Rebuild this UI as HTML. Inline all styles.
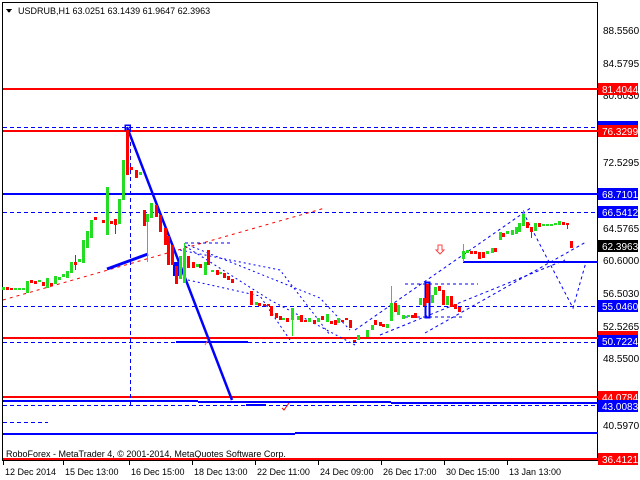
<!DOCTYPE html>
<html><head><meta charset="utf-8"><style>
html,body{margin:0;padding:0;background:#fff;width:640px;height:480px;overflow:hidden}
svg{display:block}
text{font-family:"Liberation Sans",sans-serif;font-size:10px}
.s{font-size:9px}
</style></head><body>
<svg width="640" height="480" viewBox="0 0 640 480" xmlns="http://www.w3.org/2000/svg" shape-rendering="crispEdges">
<rect x="0" y="0" width="640" height="480" fill="#fff"/>
<rect x="2.5" y="2.5" width="595" height="458" fill="none" stroke="#000" stroke-width="1"/>
<polygon points="6,9 12,9 9,13" fill="#000"/>
<text class="s" x="18" y="14">USDRUB,H1  63.0251 63.1439 61.9647 62.3963</text>
<text class="s" x="6" y="457">RoboForex - MetaTrader 4, © 2001-2014, MetaQuotes Software Corp.</text>

<g>
<rect x="3" y="88" width="595" height="2" fill="#f00"/>
<line x1="3" y1="127.5" x2="597" y2="127.5" stroke="#00f" stroke-dasharray="4,3"/>
<rect x="3" y="130" width="595" height="2" fill="#f00"/>
<rect x="3" y="193" width="595" height="2" fill="#00f"/>
<line x1="3" y1="212.5" x2="597" y2="212.5" stroke="#00f" stroke-dasharray="4,3"/>
<rect x="463" y="261" width="135" height="2" fill="#00f"/>
<line x1="3" y1="306.5" x2="597" y2="306.5" stroke="#00f" stroke-dasharray="4,3"/>
<rect x="3" y="337" width="595" height="2" fill="#f00"/>
<line x1="3" y1="342.5" x2="597" y2="342.5" stroke="#00f" stroke-dasharray="4,3"/>
<rect x="176" y="341" width="72" height="2" fill="#00f"/>
<rect x="3" y="396" width="595" height="2" fill="#f00"/>
<rect x="3" y="400" width="195" height="2" fill="#00f"/>
<rect x="198" y="401" width="193" height="2" fill="#00f"/>
<rect x="391" y="402" width="207" height="2" fill="#00f"/>
<line x1="3" y1="405.5" x2="597" y2="405.5" stroke="#00f" stroke-dasharray="4,3"/>
<rect x="246" y="404" width="20" height="2" fill="#00f"/>
<line x1="3" y1="422.5" x2="48" y2="422.5" stroke="#00f" stroke-dasharray="4,3"/>
<rect x="3" y="433" width="292" height="2" fill="#00f"/>
<rect x="295" y="432" width="303" height="2" fill="#00f"/>
<rect x="3" y="458" width="595" height="2" fill="#f00"/>
</g>

<line x1="130.5" y1="128" x2="130.5" y2="407" stroke="#00f" stroke-dasharray="4,3"/>

<g fill="none" shape-rendering="auto">
<line x1="3" y1="300" x2="325" y2="208" stroke="#f00" stroke-dasharray="3,4"/>
<line x1="127" y1="127" x2="232" y2="400" stroke="#00f" stroke-width="2.5"/>
<line x1="107" y1="269" x2="148" y2="254" stroke="#00f" stroke-width="3"/>
<polyline points="185,243 230,243" stroke="#00f" stroke-dasharray="3,3"/>
<polyline points="188,245 320,298 350,330" stroke="#00f" stroke-dasharray="2,3"/>
<polyline points="188,280 260,296 290,340" stroke="#00f" stroke-dasharray="2,3"/>
<polyline points="185,246 270,300 355,345" stroke="#00f" stroke-dasharray="2,3"/>
<polyline points="180,250 280,270 330,335" stroke="#00f" stroke-dasharray="2,3"/>
<polyline points="355,330 532,207" stroke="#00f" stroke-dasharray="3,3"/>
<polyline points="425,333 586,242" stroke="#00f" stroke-dasharray="3,3"/>
<polyline points="380,335 565,260" stroke="#00f" stroke-dasharray="3,3"/>
<polyline points="523,212 573,308 586,262" stroke="#00f" stroke-dasharray="3,3"/>
<polyline points="405,284 478,284" stroke="#00f" stroke-dasharray="3,3"/>
<polyline points="405,317 462,317" stroke="#00f" stroke-dasharray="3,3"/>
<path d="M282,408 L284,410 L289,403" stroke="#f00" stroke-width="1"/>
<path d="M205,345 L208,340" stroke="#f66" stroke-width="1"/>
<path d="M438,245 h4 v5 h2 l-4,4 -4,-4 h2z" stroke="#f44" fill="#fff"/>
</g>
<rect x="125" y="125" width="5" height="5" fill="none" stroke="#00f" stroke-width="1.5"/>
<rect x="425.5" y="282.5" width="4" height="35" fill="none" stroke="#00f" stroke-width="2"/>
<rect x="173" y="262" width="6" height="14" fill="#00f"/>

<g>
<g fill="#22dd22">
<rect x="2" y="287" width="3" height="3"/><rect x="14" y="288" width="3" height="2"/><rect x="18" y="288" width="3" height="2"/><rect x="22" y="288" width="3" height="2"/>
<rect x="26" y="281" width="3" height="12"/><rect x="38" y="280" width="3" height="2"/><rect x="46" y="278" width="3" height="10"/>
<rect x="54" y="276" width="3" height="8"/><rect x="58" y="277" width="3" height="3"/><rect x="62" y="274" width="3" height="3"/>
<rect x="66" y="271" width="3" height="7"/><rect x="70" y="262" width="3" height="11"/><rect x="78" y="259" width="3" height="3"/>
<rect x="82" y="240" width="3" height="23"/><rect x="86" y="231" width="3" height="17"/><rect x="90" y="220" width="3" height="18"/>
<rect x="106" y="187" width="3" height="48"/><rect x="118" y="199" width="3" height="25"/><rect x="122" y="160" width="3" height="40"/>
<rect x="139" y="172" width="3" height="3"/><rect x="146" y="214" width="3" height="8"/><rect x="147" y="220" width="1" height="42"/>
<rect x="150" y="203" width="3" height="15"/>
<rect x="179" y="256" width="3" height="23"/><rect x="183" y="248" width="3" height="35"/><rect x="184" y="243" width="1" height="40"/>
<rect x="196" y="264" width="3" height="3"/><rect x="204" y="262" width="3" height="13"/><rect x="211" y="270" width="3" height="2"/><rect x="219" y="272" width="3" height="2"/>
<rect x="255" y="302" width="3" height="3"/><rect x="282" y="318" width="3" height="2"/>
<rect x="291" y="308" width="3" height="12"/><rect x="292" y="318" width="1" height="18"/><rect x="297" y="316" width="3" height="4"/>
<rect x="308" y="318" width="3" height="4"/><rect x="317" y="318" width="3" height="4"/><rect x="326" y="314" width="3" height="8"/><rect x="337" y="318" width="3" height="5"/>
<rect x="357" y="335" width="3" height="5"/><rect x="366" y="330" width="3" height="7"/><rect x="371" y="325" width="3" height="5"/><rect x="386" y="324" width="3" height="4"/>
<rect x="390" y="303" width="3" height="18"/><rect x="391" y="286" width="1" height="20"/><rect x="397" y="305" width="3" height="10"/><rect x="402" y="315" width="3" height="4"/><rect x="407" y="315" width="3" height="2"/>
<rect x="419" y="298" width="3" height="7"/><rect x="431" y="295" width="3" height="8"/><rect x="434" y="287" width="3" height="8"/><rect x="446" y="296" width="3" height="9"/>
<rect x="462" y="251" width="3" height="8"/><rect x="463" y="244" width="1" height="18"/><rect x="466" y="250" width="3" height="3"/><rect x="486" y="251" width="3" height="3"/>
<rect x="491" y="248" width="3" height="5"/><rect x="499" y="232" width="3" height="8"/><rect x="506" y="231" width="3" height="3"/><rect x="511" y="230" width="3" height="5"/>
<rect x="515" y="227" width="3" height="7"/><rect x="518" y="223" width="3" height="9"/><rect x="522" y="214" width="3" height="12"/><rect x="523" y="210" width="1" height="10"/>
<rect x="534" y="223" width="3" height="8"/><rect x="542" y="224" width="3" height="2"/><rect x="546" y="224" width="3" height="2"/><rect x="550" y="224" width="3" height="2"/><rect x="554" y="223" width="3" height="2"/><rect x="558" y="221" width="3" height="4"/>
</g>
<g fill="#f00">
<rect x="6" y="287" width="3" height="3"/><rect x="10" y="288" width="3" height="2"/><rect x="30" y="280" width="3" height="3"/><rect x="34" y="281" width="3" height="3"/>
<rect x="42" y="282" width="3" height="4"/><rect x="50" y="283" width="3" height="3"/><rect x="74" y="262" width="3" height="3"/><rect x="75" y="255" width="1" height="15"/>
<rect x="94" y="217" width="3" height="3"/><rect x="102" y="220" width="3" height="3"/><rect x="110" y="221" width="3" height="3"/><rect x="114" y="219" width="3" height="6"/><rect x="115" y="219" width="1" height="15"/>
<rect x="126" y="130" width="3" height="45"/><rect x="130" y="167" width="3" height="3"/><rect x="135" y="170" width="3" height="8"/>
<rect x="143" y="210" width="3" height="16"/><rect x="155" y="205" width="3" height="12"/><rect x="159" y="215" width="3" height="17"/><rect x="164" y="228" width="3" height="17"/>
<rect x="167" y="236" width="3" height="29"/><rect x="171" y="245" width="3" height="20"/><rect x="175" y="266" width="3" height="18"/>
<rect x="187" y="256" width="3" height="12"/><rect x="192" y="262" width="3" height="6"/><rect x="199" y="264" width="3" height="4"/><rect x="207" y="250" width="3" height="15"/>
<rect x="216" y="270" width="3" height="5"/><rect x="223" y="273" width="3" height="5"/><rect x="227" y="276" width="3" height="4"/><rect x="231" y="279" width="3" height="4"/>
<rect x="250" y="291" width="3" height="14"/><rect x="258" y="303" width="3" height="3"/><rect x="263" y="304" width="3" height="2"/><rect x="267" y="304" width="3" height="2"/>
<rect x="270" y="306" width="3" height="10"/><rect x="275" y="313" width="3" height="5"/><rect x="279" y="316" width="3" height="4"/><rect x="286" y="318" width="3" height="4"/>
<rect x="300" y="315" width="3" height="7"/><rect x="304" y="320" width="3" height="2"/><rect x="313" y="320" width="3" height="4"/><rect x="321" y="316" width="3" height="4"/>
<rect x="330" y="321" width="3" height="3"/><rect x="334" y="320" width="3" height="5"/><rect x="341" y="320" width="3" height="2"/><rect x="345" y="318" width="3" height="2"/><rect x="349" y="320" width="3" height="8"/><rect x="353" y="340" width="3" height="2"/>
<rect x="374" y="320" width="3" height="5"/><rect x="379" y="322" width="3" height="4"/><rect x="382" y="324" width="3" height="3"/>
<rect x="394" y="303" width="3" height="9"/><rect x="411" y="315" width="3" height="3"/><rect x="414" y="313" width="3" height="5"/>
<rect x="423" y="298" width="3" height="8"/><rect x="426" y="284" width="3" height="19"/><rect x="438" y="286" width="3" height="5"/><rect x="442" y="290" width="3" height="15"/>
<rect x="450" y="296" width="3" height="11"/><rect x="454" y="304" width="3" height="5"/><rect x="458" y="307" width="3" height="5"/>
<rect x="470" y="251" width="3" height="3"/><rect x="474" y="251" width="3" height="3"/><rect x="478" y="252" width="3" height="7"/><rect x="482" y="252" width="3" height="6"/>
<rect x="494" y="248" width="3" height="4"/><rect x="502" y="233" width="3" height="4"/><rect x="526" y="222" width="3" height="6"/><rect x="530" y="227" width="3" height="5"/><rect x="531" y="227" width="1" height="11"/>
<rect x="538" y="223" width="3" height="4"/><rect x="562" y="222" width="3" height="3"/><rect x="566" y="223" width="3" height="2"/><rect x="567" y="223" width="1" height="6"/>
<rect x="570" y="241" width="3" height="7"/>
</g>
</g>

<g>
<text x="603" y="34">88.5560</text>
<text x="603" y="67">84.5795</text>
<text x="603" y="99">80.6030</text>
<text x="603" y="166">72.5295</text>
<text x="603" y="232">64.5765</text>
<text x="603" y="264">60.6000</text>
<text x="603" y="297">56.5030</text>
<text x="603" y="330">52.5265</text>
<text x="603" y="362">48.5500</text>
<text x="603" y="429">40.5970</text>
</g>
<g>
<rect x="598" y="83" width="40" height="12" fill="#f00"/><text x="602" y="93" fill="#fff">81.4044</text>
<rect x="598" y="121" width="40" height="6" fill="#00f"/>
<rect x="598" y="125" width="40" height="12" fill="#f00"/><text x="602" y="135" fill="#fff">76.3299</text>
<rect x="598" y="188" width="40" height="12" fill="#00f"/><text x="602" y="198" fill="#fff">68.7101</text>
<rect x="598" y="206" width="40" height="12" fill="#00f"/><text x="602" y="216" fill="#fff">66.5412</text>
<rect x="598" y="240" width="40" height="12" fill="#000"/><text x="602" y="250" fill="#fff">62.3963</text>
<rect x="598" y="300" width="40" height="12" fill="#00f"/><text x="602" y="310" fill="#fff">55.0460</text>
<rect x="598" y="331" width="40" height="5" fill="#f00"/>
<rect x="598" y="335" width="40" height="12" fill="#00f"/><text x="602" y="345" fill="#fff">50.7224</text>
<rect x="598" y="391" width="40" height="12" fill="#f00"/><text x="602" y="401" fill="#fff">44.0784</text>
<rect x="598" y="400" width="40" height="12" fill="#00f"/><text x="602" y="410" fill="#fff">43.0083</text>
<rect x="598" y="453" width="40" height="12" fill="#f00"/><text x="602" y="463" fill="#fff">36.4121</text>
</g>
<g stroke="#000">
<line x1="3.5" y1="461" x2="3.5" y2="465"/><line x1="63.5" y1="461" x2="63.5" y2="465"/><line x1="129.5" y1="461" x2="129.5" y2="465"/><line x1="192.5" y1="461" x2="192.5" y2="465"/><line x1="255.5" y1="461" x2="255.5" y2="465"/><line x1="318.5" y1="461" x2="318.5" y2="465"/><line x1="381.5" y1="461" x2="381.5" y2="465"/><line x1="444.5" y1="461" x2="444.5" y2="465"/><line x1="507.5" y1="461" x2="507.5" y2="465"/>
</g>
<g class="s">
<text class="s" x="5" y="475">12 Dec 2014</text>
<text class="s" x="65" y="475">15 Dec 13:00</text>
<text class="s" x="131" y="475">16 Dec 15:00</text>
<text class="s" x="194" y="475">18 Dec 13:00</text>
<text class="s" x="257" y="475">22 Dec 11:00</text>
<text class="s" x="320" y="475">24 Dec 09:00</text>
<text class="s" x="383" y="475">26 Dec 17:00</text>
<text class="s" x="446" y="475">30 Dec 15:00</text>
<text class="s" x="509" y="475">13 Jan 13:00</text>
</g>
</svg>
</body></html>
